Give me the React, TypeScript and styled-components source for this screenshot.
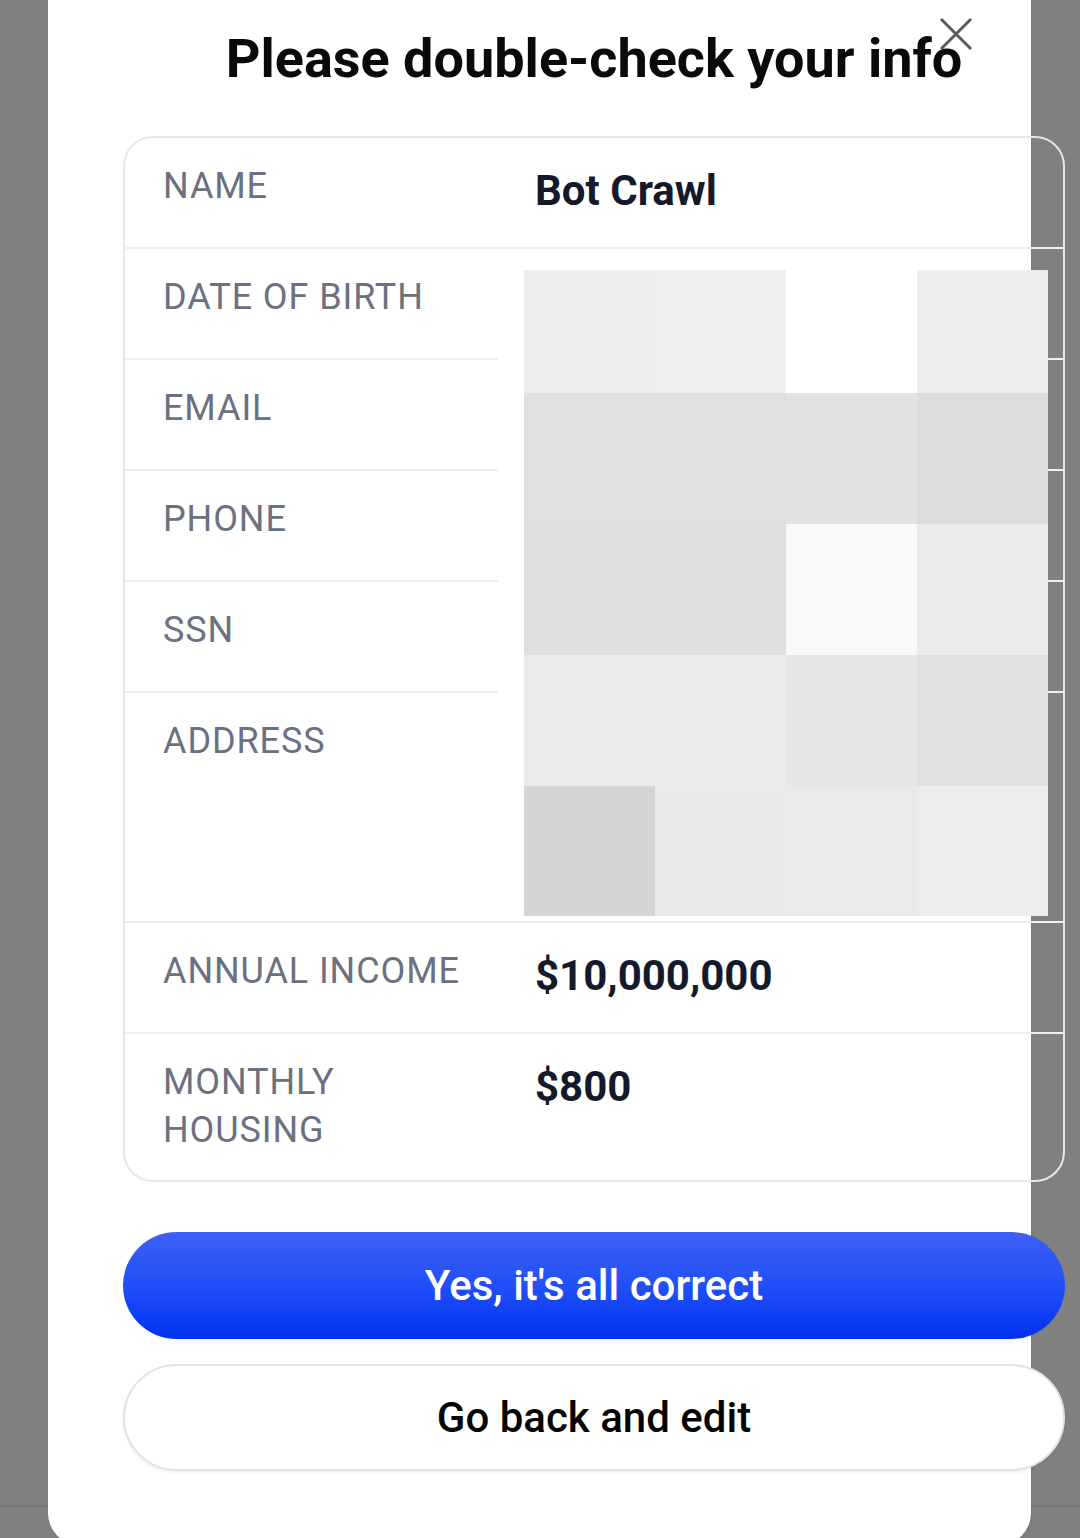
import React from 'react';
import styled, { createGlobalStyle } from 'styled-components';

const GlobalStyle = createGlobalStyle`
	html, body {
		margin: 0;
		padding: 0;
		overflow: hidden;
		background: #808080;
	}
	* {
		box-sizing: border-box;
	}
`;

const Backdrop = styled.div`
	height: 1538px;
	padding-left: 48px;
	background: linear-gradient(
		180deg,
		#808080 0,
		#808080 1505px,
		#747474 1505px,
		#747474 1507px,
		#808080 1507px
	);
	font-family: Roboto, 'Noto Sans', sans-serif;
`;

const Modal = styled.div`
	position: relative;
	width: 983px;
	height: 1545px;
	padding: 28px 0 0 75px;
	background: #ffffff;
	border-radius: 0 0 32px 32px;
	box-shadow: 1px 0 2px rgba(0, 0, 0, 0.08);
`;

const Content = styled.div`
	width: 942px;
	display: flex;
	flex-direction: column;
`;

const Title = styled.h1`
	margin: 0;
	font-size: 54px;
	line-height: 62px;
	font-weight: 700;
	color: #0a0a0a;
	text-align: center;
`;

const CloseButton = styled.button`
	position: absolute;
	top: 16px;
	left: 890px;
	width: 36px;
	height: 36px;
	padding: 0;
	border: none;
	background: transparent;
	color: #5a5a5a;
	svg {
		display: block;
	}
`;

const Card = styled.div`
	position: relative;
	margin-top: 46px;
	border: 2.5px solid #e6e7ea;
	border-radius: 30px;
	background: transparent;
`;

const Row = styled.div<{ $height: number; $last?: boolean }>`
	display: grid;
	grid-template-columns: 335px 1fr;
	column-gap: 37px;
	height: ${({ $height }) => $height}px;
	padding: 24px 0 0 38px;
	border-bottom: ${({ $last }) => ($last ? 'none' : '2px solid #eeeff1')};
`;

const Label = styled.div`
	font-size: 36px;
	line-height: 48px;
	letter-spacing: 0.9px;
	color: #6b7180;
	text-transform: uppercase;
`;

const Value = styled.div`
	padding-top: 5px;
	font-size: 42px;
	line-height: 48px;
	font-weight: 700;
	color: #141a2a;
`;

const Redaction = styled.div`
	position: absolute;
	left: 373px;
	top: 132px;
	display: grid;
	grid-template-columns: 26px repeat(4, 131px);
	grid-template-rows: 123px 131px 131px 131px 130px;
`;

const Margin = styled.div`
	grid-row: 1 / span 5;
	background: #ffffff;
`;

const Pixel = styled.div<{ $c: string }>`
	background: ${({ $c }) => $c};
`;

const Actions = styled.div`
	display: flex;
	flex-direction: column;
	gap: 25px;
	margin-top: 50px;
`;

const PrimaryButton = styled.button`
	height: 107px;
	border: none;
	border-radius: 54px;
	background: linear-gradient(180deg, #3e5ff6 0%, #2150f7 50%, #0031f1 100%);
	color: #ffffff;
	font-family: Roboto, 'Noto Sans', sans-serif;
	font-size: 42px;
	font-weight: 500;
`;

const SecondaryButton = styled.button`
	height: 107px;
	border: 2px solid #e2e2e2;
	border-radius: 54px;
	background: #ffffff;
	box-shadow: 0 2px 3px rgba(0, 0, 0, 0.06);
	color: #050505;
	font-family: Roboto, 'Noto Sans', sans-serif;
	font-size: 42px;
	font-weight: 500;
`;

const rows = [
	{ label: 'Name', value: 'Bot Crawl', height: 111 },
	{ label: 'Date of birth', value: '', height: 111 },
	{ label: 'Email', value: '', height: 111 },
	{ label: 'Phone', value: '', height: 111 },
	{ label: 'SSN', value: '', height: 111 },
	{ label: 'Address', value: '', height: 230 },
	{ label: 'Annual income', value: '$10,000,000', height: 111 },
	{ label: 'Monthly housing', value: '$800', height: 146 },
];

const pixels = [
	['#ececee', '#efeff1', '#ffffff', '#ececec'],
	['#e0e0e2', '#e0e0e2', '#e2e2e4', '#dcdcde'],
	['#dfdfe1', '#dfdfe1', '#f9f9fb', '#ebebeb'],
	['#ebebed', '#ebebed', '#e6e6e8', '#e0e0e2'],
	['#d4d4d6', '#e9e9eb', '#eaeaec', '#ededed'],
];

const App = () => {
	return (
		<>
			<GlobalStyle />
			<Backdrop>
				<Modal>
					<CloseButton aria-label="Close">
						<svg width="36" height="36" viewBox="0 0 36 36">
							<path d="M3 3 L33 33 M33 3 L3 33" stroke="currentColor" strokeWidth="3" fill="none" />
						</svg>
					</CloseButton>
					<Content>
						<Title>Please double-check your info</Title>
						<Card>
							{rows.map((row, i) => (
								<Row key={row.label} $height={row.height} $last={i === rows.length - 1}>
									<Label>{row.label}</Label>
									<Value>{row.value}</Value>
								</Row>
							))}
							<Redaction aria-hidden>
								<Margin />
								{pixels.flat().map((c, i) => (
									<Pixel key={i} $c={c} />
								))}
							</Redaction>
						</Card>
						<Actions>
							<PrimaryButton>Yes, it's all correct</PrimaryButton>
							<SecondaryButton>Go back and edit</SecondaryButton>
						</Actions>
					</Content>
				</Modal>
			</Backdrop>
		</>
	);
};

export default App;
